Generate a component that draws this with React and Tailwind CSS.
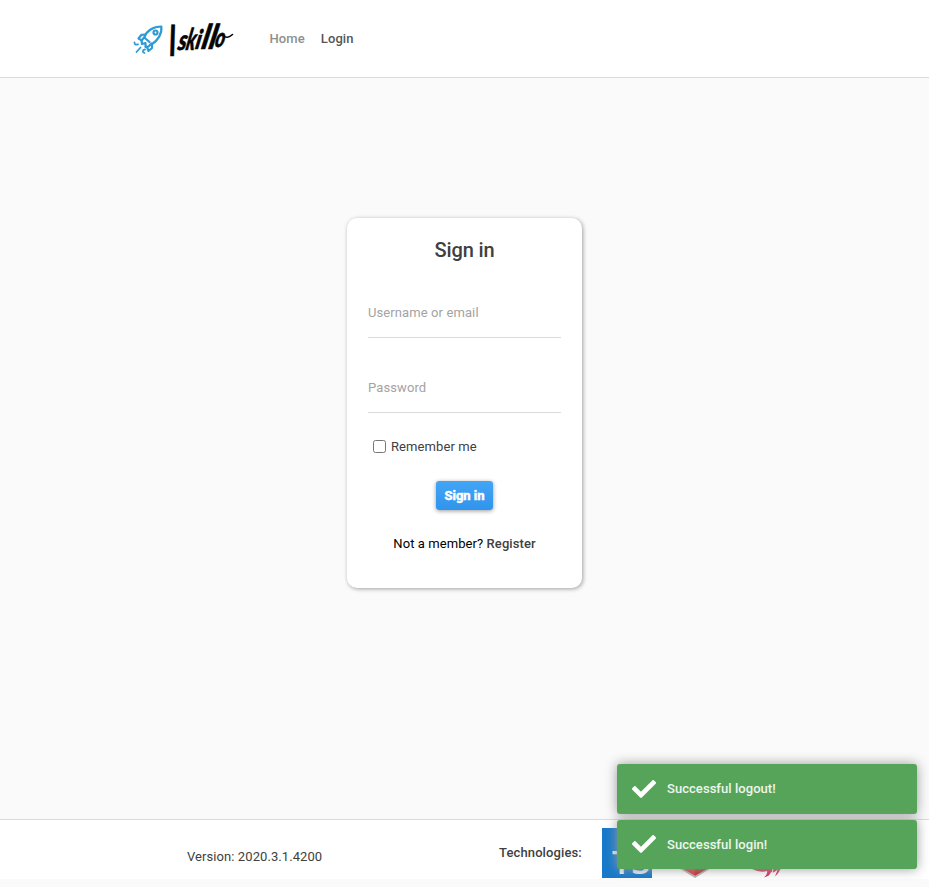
function Logo() {
  return (
    <svg className="block h-[60px] w-[130px] shrink-0" viewBox="0 0 130 60" role="img" aria-label="Iskillo">
      <g fill="none" stroke="#2f9bd6" strokeWidth="2.200" strokeLinecap="round" strokeLinejoin="round">
        <path d="M24.500 27C26.500 21 33 16.500 41.300 16.500C42.300 23.500 38 30.500 31.500 34.500" />
        <circle cx="35.500" cy="22.500" r="2" />
        <path d="M25.500 24.500L21.500 24.800L18.500 28.500L22 30.500M32 34.500L32 38L28.500 41L27 37" />
        <path d="M25 26.500L21.500 30.500L22 34L25.500 33L25.500 37L28.500 36.500L31.500 33.500M25.500 28.500L29.500 32" />
        <path d="M14.500 32.500C14.500 35 16.500 35 18 34.200M20.500 37.500L16.500 42M25 39.500C22.500 40 22 42 24.500 43" strokeWidth="1.800" />
      </g>
      <g fill="#050505" stroke="#050505" strokeWidth="0.600" strokeLinejoin="round" fontFamily="Lato, sans-serif" fontStyle="italic" fontWeight="900">
        <text transform="translate(49.500 45.500) skewX(2) scale(.56 1)" fontSize="43">I</text>
        <text transform="translate(57 39.500) skewX(-12) scale(.74 1)" fontSize="28">s</text>
        <text transform="translate(65 39.500) skewX(-12) scale(.60 1)" fontSize="30">k</text>
        <text transform="translate(74.500 38.500) skewX(-12) scale(.78 1)" fontSize="27">i</text>
        <text transform="translate(80.500 38.500) skewX(-12) scale(.86 1)" fontSize="34">l</text>
        <text transform="translate(87.800 38.500) skewX(-12) scale(.86 1)" fontSize="34">l</text>
        <text transform="translate(94 37) skewX(-12) scale(.68 1)" fontSize="27">o</text>
      </g>
      <path d="M103.500 25.500Q107 29.500 112.500 24.500" fill="none" stroke="#050505" strokeWidth="1.600" strokeLinecap="round" />
    </svg>
  );
}

function Toast({ children, className, iconClassName }) {
  return (
    <div className={`flex w-[300px] items-center rounded-[3px] bg-[#56a459] pl-[15px] text-[13px] font-medium tracking-[0.05px] text-white/90 shadow-[0_0_12px_#999] ${className}`}>
      <svg className={`mr-[11px] block h-6 w-6 ${iconClassName}`} viewBox="0 0 512 512" fill="white">
        <path d="M173.898 439.404l-166.400-166.400c-9.997-9.997-9.997-26.206 0-36.204l36.203-36.204c9.997-9.998 26.207-9.998 36.204 0L192 312.690 432.095 72.596c9.997-9.997 26.207-9.997 36.204 0l36.203 36.204c9.997 9.997 9.997 26.206 0 36.204l-294.400 294.401c-9.998 9.997-26.207 9.997-36.204-.001z" />
      </svg>
      <span>{children}</span>
    </div>
  );
}

function TypeScriptLogo() {
  return (
    <svg className="block h-[50px] w-[50px]" viewBox="0 0 50 50">
      <rect width="50" height="50" fill="#1679ca" />
      <text x="10" y="46" textLength="38" lengthAdjust="spacingAndGlyphs" fontFamily="Open Sans, sans-serif" fontWeight="600" fontSize="32" fill="#e9eef2">TS</text>
    </svg>
  );
}

function AngularLogo() {
  return (
    <svg className="block h-[50px] w-[50px]" viewBox="0 0 50 50">
      <path d="M25 0L47 8L43 39L25 50L7 39L3 8Z" fill="#b3b3b3" />
      <path d="M25 3L44 10L40.500 39L25 47.500L9.500 39L6 10Z" fill="#e23237" />
      <path d="M25 3L44 10L40.500 39L25 47.500Z" fill="#b52e31" />
      <path d="M25 9L12 36H18L20 30H30L32 36H38Z" fill="white" />
    </svg>
  );
}

function NestLogo() {
  return (
    <svg className="block h-[50px] w-[50px]" viewBox="0 0 50 50" fill="#d9305c">
      <path d="M29 3C39 8 46 18 46 29C46 33 43 37 40 41C37 44 35 45 33 44Q32 48 26 49.500Q30 46 29 43Q22 45 14 41Q10 39 8 36Q18 40 25 36C14 36 6 29 8 19C10 11 21 9 29 16Z" />
      <path d="M43 39Q42 44 37 48.500Q39 44 40 40" />
      <path d="M35 41Q35 46 31 49" stroke="white" strokeWidth="1" fill="none" />
    </svg>
  );
}

export default function App() {
  return (
    <div className="relative flex h-[887px] w-full flex-col overflow-hidden bg-[#fafafa] font-[Roboto,sans-serif] text-[13px] text-[#404040]">
      <header className="flex h-[78px] shrink-0 items-start border-b border-[#dbdbdb] bg-white pl-[120px] pt-[10px]">
        <Logo />
        <nav className="ml-[19.500px] mt-[19px] flex gap-4 font-medium leading-5 tracking-[0.1px]">
          <a className="text-[#8f8f8f]">Home</a>
          <a className="text-[#555555]">Login</a>
        </nav>
      </header>

      <main className="flex grow justify-center pt-[140px]">
        <form className="flex h-[370px] w-[235px] flex-col rounded-[10px] bg-white px-[21px] pt-5 shadow-[1px_1px_4px_rgba(0,0,0,0.36)]">
          <h1 className="text-center text-[20px] font-medium leading-6 tracking-[-0.1px]">Sign in</h1>
          <input aria-label="Username or email" placeholder="Username or email" className="mt-[26px] h-[50px] w-full border-b border-[#dbdbdb] bg-transparent tracking-[0.1px] outline-none placeholder:text-[#a3a3a3]" />
          <input aria-label="Password" placeholder="Password" className="mt-[25px] h-[50px] w-full border-b border-[#dbdbdb] bg-transparent tracking-[0.1px] outline-none placeholder:text-[#a3a3a3]" />
          <label className="ml-[5px] mt-6 flex h-5 items-center gap-[5px] tracking-[0.1px]">
            <input type="checkbox" className="m-0 mb-0.5 h-[13px] w-[13px]" />
            <span>Remember me</span>
          </label>
          <button type="button" className="mt-[24px] h-[29px] w-[57px] self-center rounded-[3px] bg-linear-to-b from-[#42a5f5] to-[#3094ed] text-[13px] font-bold text-white shadow-[0_1px_4px_rgba(0,0,0,0.4)] [-webkit-text-stroke:0.5px_white]">Sign in</button>
          <p className="mt-6 text-center leading-5 tracking-[0.08px] text-black">
            Not a member? <a className="font-medium text-[#404040]">Register</a>
          </p>
        </form>
      </main>

      <footer className="mb-[8px] flex h-[60px] shrink-0 items-start border-t border-[#dbdbdb] bg-white pl-[187px]">
        <p className="mt-[27px] w-[312px] leading-5 tracking-[0.08px]">Version: 2020.3.1.4200</p>
        <p className="mt-[23px] w-[103px] font-medium leading-5 tracking-[0.12px]">Technologies:</p>
        <div className="mt-[8px] flex gap-[18px]">
          <TypeScriptLogo />
          <AngularLogo />
          <NestLogo />
        </div>
      </footer>

      <div className="absolute bottom-[18px] right-3 flex flex-col gap-[6px]">
        <Toast className="h-[50px]" iconClassName="mb-0">Successful logout!</Toast>
        <Toast className="h-[49px]" iconClassName="mb-px">Successful login!</Toast>
      </div>
    </div>
  );
}
